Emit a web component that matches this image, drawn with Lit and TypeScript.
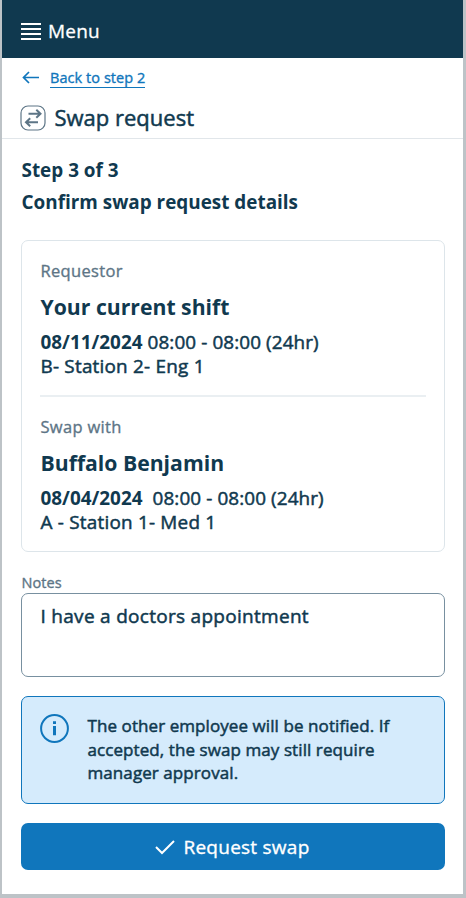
import { LitElement, html, css } from "lit";
import { customElement, property } from "lit/decorators.js";

@customElement("shift-summary")
class ShiftSummary extends LitElement {
  @property() label = "";
  @property() name = "";
  @property() date = "";
  @property() time = "";
  @property() station = "";

  static styles = css`
    :host { display: block; color: #10394f; }
    .label { font-size: 16.5px; line-height: 24px; letter-spacing: 0.32px; color: #5d7586; -webkit-text-stroke: 0.35px currentColor; }
    .name { font-size: 21.2px; line-height: 30px; font-weight: 700; margin-top: 9px; }
    .line { font-size: 18.9px; line-height: 24px; white-space: pre; letter-spacing: 0.1px; -webkit-text-stroke: 0.5px currentColor; }
    .when { margin-top: 8px; }
    .place { letter-spacing: 0.22px; }
    b { font-weight: 700; letter-spacing: 0; -webkit-text-stroke: 0; }
  `;

  render() {
    return html`
      <div class="label">${this.label}</div>
      <div class="name">${this.name}</div>
      <div class="line when"><b>${this.date}</b>${this.time}</div>
      <div class="line place">${this.station}</div>
    `;
  }
}

@customElement("app-root")
class AppRoot extends LitElement {
  static styles = css`
    :host {
      display: block; box-sizing: border-box; width: 466px; height: 898px; overflow: hidden;
      border: solid #bdc3c7; border-width: 0 3px 4px 2px;
      background: #fff; color: #10394f; font-family: "Open Sans", sans-serif;
      -webkit-text-stroke: 0.5px currentColor;
    }
    * { box-sizing: border-box; }
    svg { display: block; flex: none; }
    .bar { height: 58px; background: #10394f; color: #fff; display: flex; align-items: center; padding: 4px 0 0 19px; gap: 7px; font-size: 19px; letter-spacing: 0.2px; -webkit-text-stroke: 0.3px currentColor; }
    .back { height: 40px; display: flex; align-items: center; padding-left: 20px; gap: 11px; color: #1076bc; font-size: 14.5px; letter-spacing: 0.06px; -webkit-text-stroke: 0.35px currentColor; }
    .back span { border-bottom: 1px solid #1076bc; line-height: 19px; }
    .title { height: 41px; display: flex; align-items: center; padding-left: 18px; gap: 8.5px; font-size: 22px; border-bottom: 1px solid #e1e6ea; }
    .title svg { margin-top: -1px; }
    .title span { padding-bottom: 2px; }
    .body { padding: 15px 18px 0 19px; }
    .step { font-size: 18.9px; line-height: 32px; font-weight: 700; padding-left: 0.5px; -webkit-text-stroke: 0; }
    .card { margin-top: 22px; height: 312px; border: 1px solid #dde5ea; border-radius: 7px; padding: 18px 18px 0; }
    .card shift-summary { padding-left: 0.5px; -webkit-text-stroke: 0; }
    .rule { height: 2px; background: #eaeff2; margin: 17px 0 18px; }
    .notes-label { font-size: 14.5px; line-height: 20px; color: #5d7586; margin-top: 21px; padding-left: 0.5px; letter-spacing: 0.1px; -webkit-text-stroke: 0.35px currentColor; }
    .notes { height: 84px; border: 1px solid #7890a0; border-radius: 7px; padding: 10px 18.5px; font-size: 19px; line-height: 24px; letter-spacing: 0.29px; }
    .info { margin-top: 19px; height: 108px; border: 1px solid #1076bc; border-radius: 7px; background: #d5ebfc; display: flex; gap: 18.5px; padding: 17px 0 0 18px; font-size: 17px; line-height: 23.7px; letter-spacing: 0.08px; }
    .info div { white-space: pre-line; }
    .submit { margin-top: 19px; height: 47px; border-radius: 7px; background: #1076bc; color: #fff; display: flex; align-items: center; justify-content: center; gap: 8px; font-size: 19px; letter-spacing: 0.25px; padding-right: 1px; -webkit-text-stroke: 0.35px currentColor; }
  `;

  render() {
    return html`
      <div class="bar">
        <svg width="20" height="18" viewBox="0 0 20 18" stroke="#fff" stroke-width="1.8"><path d="M0 2H20M0 7H20M0 12H20M0 17H20" /></svg>
        <span>Menu</span>
      </div>
      <div class="back">
        <svg width="17" height="14" viewBox="0 0 17 14" fill="none" stroke="#1076bc" stroke-width="1.7"><path d="M17 6.5H1.7M7 1L1.5 6.5L7 12" /></svg>
        <span>Back to step 2</span>
      </div>
      <div class="title">
        <svg width="26" height="26" viewBox="0 0 26 26" fill="none" stroke="#5d7586">
          <rect x="1" y="1" width="24" height="24" rx="7" stroke-width="1.2" />
          <path d="M8.5 8.7H20.5M16.3 4.7L20.5 8.7L16.3 12.7M18 17.3H6M10.2 13.3L6 17.3L10.2 21.3" stroke-width="2" />
        </svg>
        <span>Swap request</span>
      </div>
      <div class="body">
        <div class="step">Step 3 of 3</div>
        <div class="step">Confirm swap request details</div>
        <div class="card">
          <shift-summary label="Requestor" name="Your current shift" date="08/11/2024" time=" 08:00 - 08:00 (24hr)" station="B- Station 2- Eng 1"></shift-summary>
          <div class="rule"></div>
          <shift-summary label="Swap with" name="Buffalo Benjamin" date="08/04/2024" time="  08:00 - 08:00 (24hr)" station="A - Station 1- Med 1"></shift-summary>
        </div>
        <div class="notes-label">Notes</div>
        <div class="notes">I have a doctors appointment</div>
        <div class="info">
          <svg width="29" height="29" viewBox="0 0 29 29" fill="none" stroke="#1076bc">
            <circle cx="14.5" cy="14.5" r="13.4" stroke-width="2" />
            <path d="M14.5 12V21.3M14.5 7.2V9.9" stroke-width="3" />
          </svg>
          <div>The other employee will be notified. If
accepted, the swap may still require
manager approval.</div>
        </div>
        <div class="submit">
          <svg width="20" height="16" viewBox="0 0 20 16" fill="none" stroke="#fff" stroke-width="2"><path d="M1 8L7 14L19 2" /></svg>
          <span>Request swap</span>
        </div>
      </div>
    `;
  }
}
